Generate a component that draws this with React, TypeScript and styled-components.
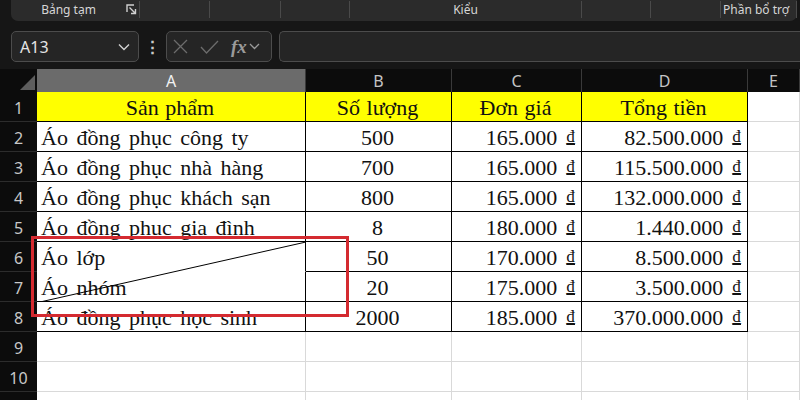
import React from 'react';
import styled, { createGlobalStyle } from 'styled-components';

const GlobalStyle = createGlobalStyle`
  body {
    margin: 0;
    background: #161616;
    font-family: 'Noto Sans', 'Open Sans', sans-serif;
    overflow: hidden;
  }
`;

const COLS = '37px 269px 146px 130px 166px 1fr';
const SERIF = `"Liberation Serif", "Times New Roman", serif`;

const Page = styled.div`
  width: 800px;
  height: 400px;
  overflow: hidden;
  background: #161616;
`;

const Ribbon = styled.div`
  display: flex;
  height: 21px;
  margin: 0 3px 0 11px;
  background: #2b2b2b;
  border-radius: 0 0 7px 7px;
`;

const RibbonGroup = styled.div<{ $w: number; $align?: string; $last?: boolean }>`
  width: ${(p) => p.$w}px;
  flex: none;
  display: flex;
  align-items: center;
  justify-content: ${(p) => p.$align || 'center'};
  gap: 30px;
  padding: 0 2px;
  box-sizing: border-box;
  border-right: ${(p) => (p.$last ? 'none' : '1px solid #4a4a4a')};
  font-size: 12px;
  color: #d6d6d6;
  white-space: nowrap;
  overflow: hidden;
  height: 17px;
  margin-top: 1px;
`;

const GroupLabel = styled.span`
  margin-left: 28px;
`;

const Launcher = styled.svg`
  width: 11px;
  height: 11px;
  flex: none;
`;

const FormulaBar = styled.div`
  display: flex;
  align-items: center;
  height: 31px;
  margin: 10px 0 7px 11px;
`;

const Box = styled.div<{ $w?: number }>`
  height: 31px;
  box-sizing: border-box;
  background: #252525;
  border: 1px solid #4c4c4c;
  border-radius: 5px;
  display: flex;
  align-items: center;
  width: ${(p) => (p.$w ? `${p.$w}px` : 'auto')};
  flex: ${(p) => (p.$w ? 'none' : '1')};
`;

const FormulaInput = styled(Box)`
  margin-left: 7px;
  border-right: none;
  border-radius: 5px 0 0 5px;
`;

const NameText = styled.span`
  flex: 1;
  padding-left: 8px;
  font-size: 16px;
  color: #e4e4e4;
`;

const NameChevron = styled.svg`
  margin-right: 8px;
`;

const Dots = styled.div`
  width: 27px;
  text-align: center;
  font-size: 17px;
  font-weight: 700;
  color: #c9c9c9;
`;

const FxBoxInner = styled.div`
  display: flex;
  align-items: center;
  gap: 12px;
  padding-left: 6px;
`;

const FxGroup = styled.span`
  display: flex;
  align-items: center;
  gap: 2px;
`;

const FxText = styled.span`
  font-family: ${SERIF};
  font-style: italic;
  font-weight: 700;
  font-size: 19px;
  color: #9a9a9a;
`;

const Sheet = styled.div`
  position: relative;
`;

const Row = styled.div<{ $h: number }>`
  display: grid;
  grid-template-columns: ${COLS};
  height: ${(p) => p.$h}px;
`;

const ColHead = styled.div<{ $sel?: boolean }>`
  background: ${(p) => (p.$sel ? '#6b6b6b' : '#0c0c0c')};
  color: ${(p) => (p.$sel ? '#f2f2f2' : '#c4c4c4')};
  border-right: 1px solid #3a3a3a;
  border-bottom: ${(p) => (p.$sel ? '1px solid #3f8f5f' : '1px solid #0c0c0c')};
  box-sizing: border-box;
  display: flex;
  align-items: center;
  justify-content: center;
  font-size: 16px;
  padding-top: 1px;
`;

const Corner = styled.div`
  background: #0c0c0c;
  display: flex;
  align-items: flex-end;
  justify-content: flex-end;
  padding: 0 2px 3px 0;
  box-sizing: border-box;
`;

const RowHead = styled.div`
  background: #0c0c0c;
  color: #c8c8c8;
  border-bottom: 1px solid #2c2c2c;
  box-sizing: border-box;
  display: flex;
  align-items: center;
  justify-content: center;
  font-size: 16px;
  padding-top: 3px;
`;

const Cell = styled.div<{
  $fill?: string;
  $align?: 'left' | 'center' | 'right';
  $line?: string;
  $noBottom?: boolean;
}>`
  background: ${(p) => p.$fill || '#ffffff'};
  border-right: 1px solid ${(p) => p.$line || '#d9d9d9'};
  border-bottom: 1px solid ${(p) => (p.$noBottom ? '#ffffff' : p.$line || '#d9d9d9')};
  box-sizing: border-box;
  display: flex;
  align-items: flex-end;
  justify-content: ${(p) =>
    p.$align === 'center' ? 'center' : p.$align === 'right' ? 'flex-end' : 'flex-start'};
  padding: 0 6px 0 4px;
  font-family: ${SERIF};
  font-size: 22px;
  line-height: 26px;
  word-spacing: ${(p) => (p.$align === 'left' || !p.$align ? '3px' : '1px')};
  color: #111111;
  white-space: nowrap;
  overflow: hidden;
`;

const Dong = styled.span`
  font-size: 17px;
  text-decoration: underline;
  text-underline-offset: 2px;
  text-decoration-thickness: 1px;
  margin-left: 9px;
  position: relative;
  top: -4px;
  line-height: 20px;
`;

const Diagonal = styled.svg`
  position: absolute;
  left: 37px;
  top: 173px;
  width: 269px;
  height: 60px;
  pointer-events: none;
`;

const Highlight = styled.div`
  position: absolute;
  left: 31px;
  top: 167px;
  width: 318px;
  height: 81px;
  box-sizing: border-box;
  border: 3px solid #d42a30;
  pointer-events: none;
`;

type Item = { name: string; qty: string; price: string; total: string };

const items: Item[] = [
  { name: 'Áo đồng phục công ty', qty: '500', price: '165.000', total: '82.500.000' },
  { name: 'Áo đồng phục nhà hàng', qty: '700', price: '165.000', total: '115.500.000' },
  { name: 'Áo đồng phục khách sạn', qty: '800', price: '165.000', total: '132.000.000' },
  { name: 'Áo đồng phục gia đình', qty: '8', price: '180.000', total: '1.440.000' },
  { name: 'Áo lớp', qty: '50', price: '170.000', total: '8.500.000' },
  { name: 'Áo nhóm', qty: '20', price: '175.000', total: '3.500.000' },
  { name: 'Áo đồng phục học sinh', qty: '2000', price: '185.000', total: '370.000.000' },
];

const Money = ({ value }: { value: string }) => (
  <Cell $align="right" $line="#000">
    {value}
    <Dong>₫</Dong>
  </Cell>
);

const EmptyRow = ({ label }: { label: string }) => (
  <Row $h={30}>
    <RowHead>{label}</RowHead>
    <Cell />
    <Cell />
    <Cell />
    <Cell />
    <Cell />
  </Row>
);

export default function App() {
  return (
    <Page>
      <GlobalStyle />
      <Ribbon>
        <RibbonGroup $w={129}>
          <GroupLabel>Bảng tạm</GroupLabel>
          <Launcher viewBox="0 0 11 11">
            <path d="M1 8V1h7" fill="none" stroke="#d0d0d0" strokeWidth="1.4" />
            <path d="M3.5 3.5L9.5 9.5M9.5 5v4.5H5" fill="none" stroke="#d0d0d0" strokeWidth="1.4" />
          </Launcher>
        </RibbonGroup>
        <RibbonGroup $w={70} />
        <RibbonGroup $w={71} />
        <RibbonGroup $w={69} />
        <RibbonGroup $w={232}>Kiểu</RibbonGroup>
        <RibbonGroup $w={69} />
        <RibbonGroup $w={70} />
        <RibbonGroup $w={76} $align="flex-start">Phần bổ trợ</RibbonGroup>
      </Ribbon>

      <FormulaBar>
        <Box $w={128}>
          <NameText>A13</NameText>
          <NameChevron width="12" height="8" viewBox="0 0 12 8">
            <path d="M1 1.5l5 5 5-5" fill="none" stroke="#d2d2d2" strokeWidth="1.4" />
          </NameChevron>
        </Box>
        <Dots>⋮</Dots>
        <Box $w={106}>
          <FxBoxInner>
            <svg width="15" height="15" viewBox="0 0 15 15">
              <path d="M1 1l13 13M14 1L1 14" stroke="#6c6c6c" strokeWidth="1.3" />
            </svg>
            <svg width="19" height="14" viewBox="0 0 19 14">
              <path d="M1 7l5.5 6L18 1" fill="none" stroke="#6c6c6c" strokeWidth="1.3" />
            </svg>
            <FxGroup>
              <FxText>fx</FxText>
              <svg width="11" height="7" viewBox="0 0 11 7">
                <path d="M1 1l4.5 4.5L10 1" fill="none" stroke="#9a9a9a" strokeWidth="1.3" />
              </svg>
            </FxGroup>
          </FxBoxInner>
        </Box>
        <FormulaInput />
      </FormulaBar>

      <Sheet>
        <Row $h={23}>
          <Corner>
            <svg width="15" height="15" viewBox="0 0 15 15">
              <path d="M15 0V15H0z" fill="#5e5e5e" />
            </svg>
          </Corner>
          <ColHead $sel>A</ColHead>
          <ColHead>B</ColHead>
          <ColHead>C</ColHead>
          <ColHead>D</ColHead>
          <ColHead>E</ColHead>
        </Row>
        <Row $h={30}>
          <RowHead>1</RowHead>
          <Cell $fill="#ffff00" $align="center" $line="#000">Sản phẩm</Cell>
          <Cell $fill="#ffff00" $align="center" $line="#000">Số lượng</Cell>
          <Cell $fill="#ffff00" $align="center" $line="#000">Đơn giá</Cell>
          <Cell $fill="#ffff00" $align="center" $line="#000">Tổng tiền</Cell>
          <Cell />
        </Row>
        {items.map((it, i) => (
          <Row $h={30} key={it.name}>
            <RowHead>{i + 2}</RowHead>
            <Cell $line="#000" $noBottom={i === 4}>{it.name}</Cell>
            <Cell $align="center" $line="#000">{it.qty}</Cell>
            <Money value={it.price} />
            <Money value={it.total} />
            <Cell />
          </Row>
        ))}
        <EmptyRow label="9" />
        <EmptyRow label="10" />
        <EmptyRow label="" />
        <Diagonal viewBox="0 0 269 60">
          <line x1="3" y1="60" x2="269" y2="0" stroke="#000" strokeWidth="1" />
        </Diagonal>
        <Highlight />
      </Sheet>
    </Page>
  );
}
